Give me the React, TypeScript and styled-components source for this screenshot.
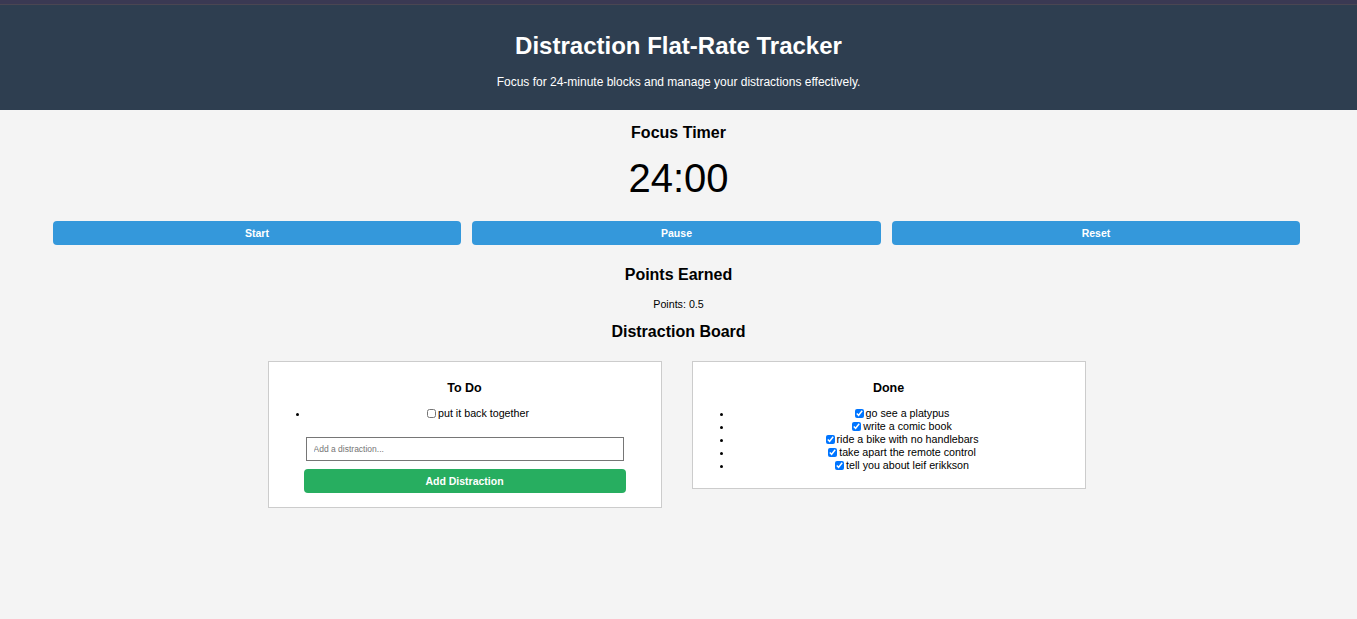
import React, { useState } from "react";
import styled, { createGlobalStyle } from "styled-components";

const Global = createGlobalStyle`
  html, body { margin: 0; padding: 0; }
  body {
    background: #f4f4f4;
    font-family: "Liberation Sans", Arial, sans-serif;
    color: #000;
  }
  * { box-sizing: border-box; }
`;

const Page = styled.div`
  display: flex;
  flex-direction: column;
  align-items: stretch;
  min-height: 619px;
`;

const Header = styled.header`
  background: #2e3e50;
  border-top: 4px solid #3a3953;
  box-shadow: inset 0 1px 0 #4a4652;
  height: 110px;
  display: flex;
  flex-direction: column;
  align-items: center;
  color: #fff;
`;

const Title = styled.h1`
  margin: 28px 0 0;
  font-size: 24px;
  line-height: 28px;
  font-weight: bold;
`;

const Subtitle = styled.p`
  margin: 15px 0 0;
  font-size: 12px;
  line-height: 14px;
`;

const SectionTitle = styled.h2<{ $top: number }>`
  margin: ${(p) => p.$top}px 0 0;
  font-size: 16px;
  line-height: 20px;
  font-weight: bold;
  text-align: center;
`;

const Timer = styled.div`
  margin-top: 12px;
  font-size: 40px;
  line-height: 46px;
  text-align: center;
`;

const Controls = styled.div`
  margin-top: 20px;
  display: grid;
  grid-template-columns: repeat(3, 408.5px);
  column-gap: 11px;
  justify-content: center;
  padding-right: 4px;
`;

const ActionButton = styled.button<{ $bg: string }>`
  height: 24px;
  border: none;
  border-radius: 4px;
  background: ${(p) => p.$bg};
  color: #fff;
  font-family: "Liberation Sans", Arial, sans-serif;
  font-size: 10.5px;
  font-weight: bold;
  padding: 0;
  cursor: pointer;
`;

const PointsText = styled.p`
  margin: 13px 0 0;
  font-size: 10.7px;
  line-height: 12px;
  text-align: center;
`;

const Board = styled.div`
  margin-top: 19px;
  display: flex;
  justify-content: center;
  align-items: flex-start;
  gap: 30px;
  padding-right: 4px;
`;

const Column = styled.div`
  width: 394px;
  background: #fff;
  border: 1px solid #cccccc;
  padding: 0 13px 14px;
  display: flex;
  flex-direction: column;
  align-items: center;
`;

const ColumnTitle = styled.h3`
  margin: 18px 0 0;
  font-size: 12.5px;
  line-height: 16px;
  font-weight: bold;
`;

const List = styled.ul`
  align-self: stretch;
  margin: 11px 0 2px;
  padding-left: 27px;
`;

const Item = styled.li`
  font-size: 10.7px;
  line-height: 13px;
  text-align: center;
`;

const Check = styled.input`
  width: 9px;
  height: 9px;
  margin: 0 2px 0 0;
  vertical-align: -1px;
`;

const DistractionInput = styled.input`
  margin-top: 15px;
  width: 318px;
  height: 24px;
  border: 1px solid #767676;
  border-radius: 0;
  padding: 0 7px;
  font-family: "Liberation Sans", Arial, sans-serif;
  font-size: 8.5px;
  background: #fff;
  &::placeholder { color: #757575; }
`;

const AddButton = styled(ActionButton)`
  margin-top: 8px;
  width: 322px;
  font-size: 10.5px;
`;

const todo = ["put it back together"];
const done = [
  "go see a platypus",
  "write a comic book",
  "ride a bike with no handlebars",
  "take apart the remote control",
  "tell you about leif erikkson",
];

export default function App() {
  const [text, setText] = useState("");
  return (
    <Page>
      <Global />
      <Header>
        <Title>Distraction Flat-Rate Tracker</Title>
        <Subtitle>Focus for 24-minute blocks and manage your distractions effectively.</Subtitle>
      </Header>
      <SectionTitle $top={13}>Focus Timer</SectionTitle>
      <Timer>24:00</Timer>
      <Controls>
        <ActionButton $bg="#3498db">Start</ActionButton>
        <ActionButton $bg="#3498db">Pause</ActionButton>
        <ActionButton $bg="#3498db">Reset</ActionButton>
      </Controls>
      <SectionTitle $top={20}>Points Earned</SectionTitle>
      <PointsText>Points: 0.5</PointsText>
      <SectionTitle $top={12}>Distraction Board</SectionTitle>
      <Board>
        <Column>
          <ColumnTitle>To Do</ColumnTitle>
          <List>
            {todo.map((t) => (
              <Item key={t}>
                <Check type="checkbox" readOnly />
                {t}
              </Item>
            ))}
          </List>
          <DistractionInput
            placeholder="Add a distraction..."
            value={text}
            onChange={(e) => setText(e.target.value)}
          />
          <AddButton $bg="#27ae60">Add Distraction</AddButton>
        </Column>
        <Column>
          <ColumnTitle>Done</ColumnTitle>
          <List>
            {done.map((t) => (
              <Item key={t}>
                <Check type="checkbox" checked readOnly />
                {t}
              </Item>
            ))}
          </List>
        </Column>
      </Board>
    </Page>
  );
}
